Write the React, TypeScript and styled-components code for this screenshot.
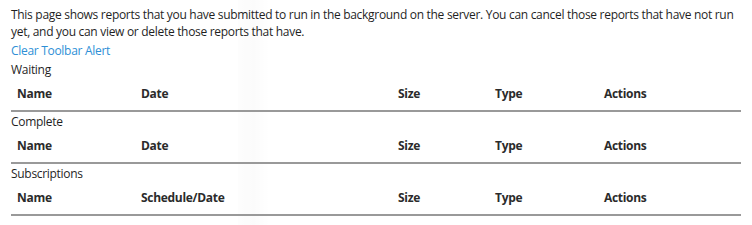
import React from 'react';
import styled, { createGlobalStyle } from 'styled-components';

const GlobalStyle = createGlobalStyle`
  html, body {
    margin: 0;
    padding: 0;
    background: #ffffff;
  }
  body {
    font-family: "Open Sans", "Noto Sans", "Liberation Sans", sans-serif;
    font-size: 12px;
    letter-spacing: -0.3px;
    color: #1f1f1f;
  }
`;

const Page = styled.div`
  position: relative;
  width: 752px;
  height: 225px;
  overflow: hidden;
  padding: 6px 11px 0 11px;
  box-sizing: border-box;
`;

const Band = styled.div`
  position: absolute;
  left: 238px;
  top: 0;
  width: 32px;
  height: 225px;
  background: linear-gradient(to right, rgba(0, 0, 0, 0.008), rgba(0, 0, 0, 0.014), rgba(0, 0, 0, 0));
  z-index: 0;
  pointer-events: none;
`;

const Content = styled.div`
  position: relative;
  z-index: 1;
  display: flex;
  flex-direction: column;
`;

const Intro = styled.p`
  margin: 0;
  line-height: 17px;
  width: 730px;
`;

const AlertLink = styled.a`
  display: block;
  color: #2e8fd6;
  text-decoration: none;
  line-height: 18px;
  margin-top: 2px;
  cursor: pointer;
`;

const Section = styled.div`
  display: flex;
  flex-direction: column;
`;

const SectionTitle = styled.div`
  line-height: 18px;
  margin-top: 1px;
`;

const HeaderRow = styled.div`
  display: grid;
  grid-template-columns: 124px 257px 97px 109px 143px;
  width: 730px;
  padding: 6px 0 7px 0;
  border-bottom: 2px solid #999999;
`;

const HeaderCell = styled.div`
  padding-left: 6px;
  font-weight: 700;
  color: #2b2b2b;
  line-height: 18px;
`;

type SectionData = { title: string; dateLabel: string };

const sections: SectionData[] = [
  { title: 'Waiting', dateLabel: 'Date' },
  { title: 'Complete', dateLabel: 'Date' },
  { title: 'Subscriptions', dateLabel: 'Schedule/Date' },
];

const ReportSection = ({ title, dateLabel }: SectionData) => (
  <Section>
    <SectionTitle>{title}</SectionTitle>
    <HeaderRow>
      <HeaderCell>Name</HeaderCell>
      <HeaderCell>{dateLabel}</HeaderCell>
      <HeaderCell>Size</HeaderCell>
      <HeaderCell>Type</HeaderCell>
      <HeaderCell>Actions</HeaderCell>
    </HeaderRow>
  </Section>
);

export default function App() {
  return (
    <>
      <GlobalStyle />
      <Page>
        <Band />
        <Content>
          <Intro>
            This page shows reports that you have submitted to run in the background on the server. You can
            cancel those reports that have not run yet, and you can view or delete those reports that have.
          </Intro>
          <AlertLink>Clear Toolbar Alert</AlertLink>
          {sections.map((s) => (
            <ReportSection key={s.title} {...s} />
          ))}
        </Content>
      </Page>
    </>
  );
}
